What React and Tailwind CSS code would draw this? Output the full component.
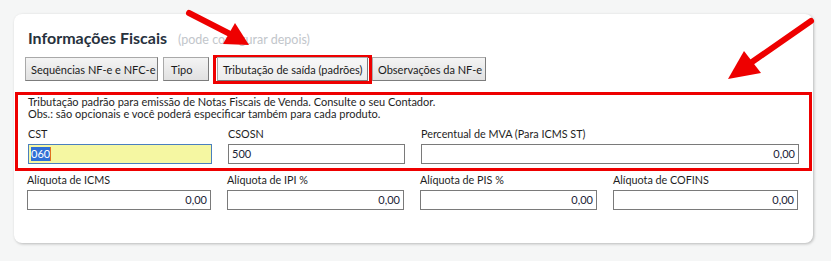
import React from 'react';

const btn =
  'h-[24px] px-[5px] text-[11px] whitespace-nowrap text-[#1b1b1b] bg-gradient-to-b from-[#f4f4f4] to-[#e1e1e1] border border-[#a9a9a9] border-r-[#7c7c7c] border-b-[#7c7c7c] leading-none';

const Field = ({ label, value, className = '', right = true }) => (
  <div className={`flex flex-col ${className}`}>
    <label className="text-[10.8px] leading-[14px] text-[#1e1e1e] mb-[3px] whitespace-nowrap">{label}</label>
    <div
      className={`h-[20px] border border-[#7a7a7a] bg-white flex items-center px-[3px] text-[11px] text-[#1b2436] ${
        right ? 'justify-end' : 'justify-start'
      }`}
    >
      {value}
    </div>
  </div>
);

const Arrows = () => (
  <svg className="absolute inset-0 pointer-events-none" width="831" height="261" viewBox="0 0 831 261">
    <line x1="189" y1="13" x2="232" y2="35" stroke="#ee0000" strokeWidth="6" strokeLinecap="round" />
    <polygon points="249,45 223,44 235,23" fill="#ee0000" />
    <line x1="811" y1="21" x2="752" y2="62" stroke="#ee0000" strokeWidth="6" strokeLinecap="round" />
    <polygon points="728,79 744,51 761,73" fill="#ee0000" />
  </svg>
);

export default function App() {
  return (
    <div
      className="relative w-[831px] h-[261px] bg-[#f5f6f6] pt-[14px] pl-[14px] overflow-hidden"
      style={{ fontFamily: 'Lato, "Open Sans", sans-serif' }}
    >
      <div className="w-[799px] h-[229px] bg-white rounded-[8px] shadow-[1px_1px_3px_rgba(0,0,0,0.25)] pt-[16px]">
        {/* Title */}
        <div className="flex items-baseline pl-[14px] h-[20px]">
          <h2 className="text-[16px] font-bold text-[#27313d] leading-none">Informações Fiscais</h2>
          <span className="ml-[11px] text-[12.5px] text-[#c2c6cb] leading-none">(pode configurar depois)</span>
        </div>

        {/* Tabs */}
        <div className="flex items-center pl-[11px] mt-[4px] h-[30px]">
          <button className={`${btn} w-[133px]`}>Sequências NF-e e NFC-e</button>
          <button className={`${btn} w-[46px] ml-[5px] text-left pl-[7px]`}>Tipo</button>
          <div className="ml-[4px] border-[3px] border-[#ee0000] p-[1px] h-[29px] flex items-center">
            <button className={`${btn} w-[151px] from-[#f8f8f8] to-[#ececec]`}>Tributação de saída (padrões)</button>
          </div>
          <button className={`${btn} w-[114px]`}>Observações da NF-e</button>
        </div>

        {/* Highlighted section */}
        <div className="mt-[8px] ml-[1px] mr-[1px] border-[3px] border-[#ee0000] pl-[10px] pr-[10px] pb-[4px]">
          <p className="text-[11px] leading-[12px] text-[#1e1e1e] pt-[1px]">
            Tributação padrão para emissão de Notas Fiscais de Venda. Consulte o seu Contador.
          </p>
          <p className="text-[11px] leading-[12px] text-[#1e1e1e]">
            Obs.: são opcionais e você poderá especificar também para cada produto.
          </p>
          <div className="grid grid-cols-[184px_177px_177px_185px] gap-x-[16px] mt-[7px]">
            <div className="flex flex-col">
              <label className="text-[10.8px] leading-[14px] text-[#1e1e1e] mb-[3px]">CST</label>
              <div className="h-[20px] border border-[#4a7fbf] bg-[#f5f7a2] flex items-center px-[2px] text-[11px]">
                <span className="bg-[#2f6fd6] text-white leading-[14px]">060</span>
                <span className="w-[1px] h-[14px] bg-[#e07020]" />
              </div>
            </div>
            <Field label="CSOSN" value="500" right={false} />
            <Field label="Percentual de MVA (Para ICMS ST)" value="0,00" className="col-span-2" />
          </div>
        </div>

        {/* Second row */}
        <div className="grid grid-cols-[184px_177px_177px_185px] gap-x-[16px] pl-[13px] mt-[2px]">
          <Field label="Alíquota de ICMS" value="0,00" />
          <Field label="Alíquota de IPI %" value="0,00" />
          <Field label="Alíquota de PIS %" value="0,00" />
          <Field label="Alíquota de COFINS" value="0,00" />
        </div>
      </div>
      <Arrows />
    </div>
  );
}
